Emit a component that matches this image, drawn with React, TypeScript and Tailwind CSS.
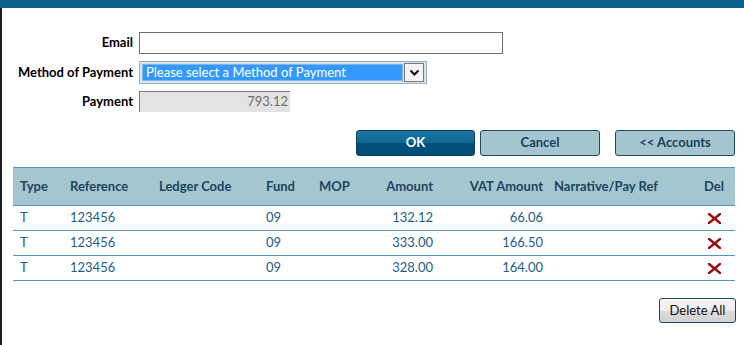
import React from "react";

const rows = [
  { type: "T", ref: "123456", fund: "09", amount: "132.12", vat: "66.06" },
  { type: "T", ref: "123456", fund: "09", amount: "333.00", vat: "166.50" },
  { type: "T", ref: "123456", fund: "09", amount: "328.00", vat: "164.00" },
];

function XIcon() {
  return (
    <svg width="13" height="11" viewBox="0 0 13 11">
      <path d="M1 1 L12 10 M12 1 L1 10" stroke="#9b0a0a" strokeWidth="2.4" strokeLinecap="square" />
    </svg>
  );
}

export default function App() {
  return (
    <div
      className="w-[744px] h-[345px] bg-white relative overflow-hidden text-[13px]"
      style={{ fontFamily: "Lato, 'Open Sans', sans-serif" }}
    >
      <div className="h-[8px] bg-[#0b6089]" />
      <div className="flex h-[337px]">
        <div className="w-[2px] bg-[#1c1c24]" />
        <div className="flex-1 flex flex-col">
          {/* form */}
          <div className="flex flex-col pt-[24px] gap-[7px]">
            <div className="flex items-center h-[22px]">
              <div className="w-[131px] text-right font-bold text-black">Email</div>
              <div className="ml-[6px] w-[364px] h-[22px] border border-[#6f6f6f] bg-white" />
            </div>
            <div className="flex items-center h-[23px]">
              <div className="w-[131px] text-right font-bold text-black whitespace-nowrap">Method of Payment</div>
              <div className="ml-[6px] w-[288px] h-[23px] border border-[#9fb3bf] bg-[#d7e4ea] flex items-center p-[2px] gap-[1px]">
                <div className="flex-1 h-[17px] bg-[#3399ff] border border-[#7fb5e8] text-white flex items-center pl-[3px] leading-none whitespace-nowrap">
                  Please select a Method of Payment
                </div>
                <div className="w-[20px] h-[19px] bg-[#f3f3f3] border border-[#7a7a7a] flex items-center justify-center">
                  <svg width="11" height="7" viewBox="0 0 11 7">
                    <path d="M1.5 1.5 L5.5 5.5 L9.5 1.5" stroke="#000" strokeWidth="2" fill="none" />
                  </svg>
                </div>
              </div>
            </div>
            <div className="flex items-center h-[21px]">
              <div className="w-[131px] text-right font-bold text-black">Payment</div>
              <div className="ml-[6px] w-[151px] h-[21px] bg-[#e3e3e3] border-t border-l border-[#7a7a7a] text-[#6d6d6d] text-right pr-[2px] flex items-center justify-end">
                793.12
              </div>
            </div>
          </div>

          {/* buttons */}
          <div className="flex mt-[18px] pl-[354px] h-[26px]">
            <button className="w-[119px] h-[26px] rounded-[3px] border border-[#0b3c58] text-white font-bold bg-[linear-gradient(#1a76a2_0%,#0f6792_50%,#00507c_52%,#004d78_100%)]">
              OK
            </button>
            <button className="ml-[5px] w-[120px] h-[26px] rounded-[3px] border border-[#1f4b5f] bg-[#a4c5cf] text-[#17405a] font-bold">
              Cancel
            </button>
            <button className="ml-[15px] w-[120px] h-[26px] rounded-[3px] border border-[#1f4b5f] bg-[#a4c5cf] text-[#17405a] font-bold">
              &lt;&lt; Accounts
            </button>
          </div>

          {/* table */}
          <div className="mt-[11px] ml-[11px] w-[722px]">
            <table className="w-full border-collapse table-fixed">
              <colgroup>
                <col className="w-[50px]" />
                <col className="w-[89px]" />
                <col className="w-[107px]" />
                <col className="w-[53px]" />
                <col className="w-[48px]" />
                <col className="w-[80px]" />
                <col className="w-[107px]" />
                <col className="w-[140px]" />
                <col />
              </colgroup>
              <thead>
                <tr className="h-[38px] bg-[#a3c6d0] border-t border-[#4d97c0] border-b text-[#1d4560] font-bold">
                  <th className="text-left pl-[7px] font-bold">Type</th>
                  <th className="text-left pl-[7px] font-bold">Reference</th>
                  <th className="text-left pl-[7px] font-bold whitespace-nowrap">Ledger Code</th>
                  <th className="text-left pl-[7px] font-bold">Fund</th>
                  <th className="text-left pl-[7px] font-bold">MOP</th>
                  <th className="text-right pr-[7px] font-bold">Amount</th>
                  <th className="text-right pr-[4px] font-bold whitespace-nowrap">VAT Amount</th>
                  <th className="text-left pl-[7px] font-bold whitespace-nowrap">Narrative/Pay Ref</th>
                  <th className="text-right pr-[11px] font-bold">Del</th>
                </tr>
              </thead>
              <tbody>
                {rows.map((r, i) => (
                  <tr key={i} className="h-[25px] border-b border-[#4d97c0] text-[#1b5d86]">
                    <td className="pl-[7px]">{r.type}</td>
                    <td className="pl-[7px]">{r.ref}</td>
                    <td />
                    <td className="pl-[7px]">{r.fund}</td>
                    <td />
                    <td className="text-right pr-[7px]">{r.amount}</td>
                    <td className="text-right pr-[4px]">{r.vat}</td>
                    <td />
                    <td className="text-right pr-[14px]">
                      <span className="inline-flex align-middle"><XIcon /></span>
                    </td>
                  </tr>
                ))}
              </tbody>
            </table>
          </div>

          <div className="flex justify-end pr-[8px] mt-[17px]">
            <button className="w-[77px] h-[25px] rounded-[3px] border border-[#1d4a5e] text-[#111] bg-[linear-gradient(#f6f6f6_0%,#ececec_50%,#dcdcdc_52%,#d2d2d2_100%)]">
              Delete All
            </button>
          </div>
        </div>
      </div>
    </div>
  );
}
